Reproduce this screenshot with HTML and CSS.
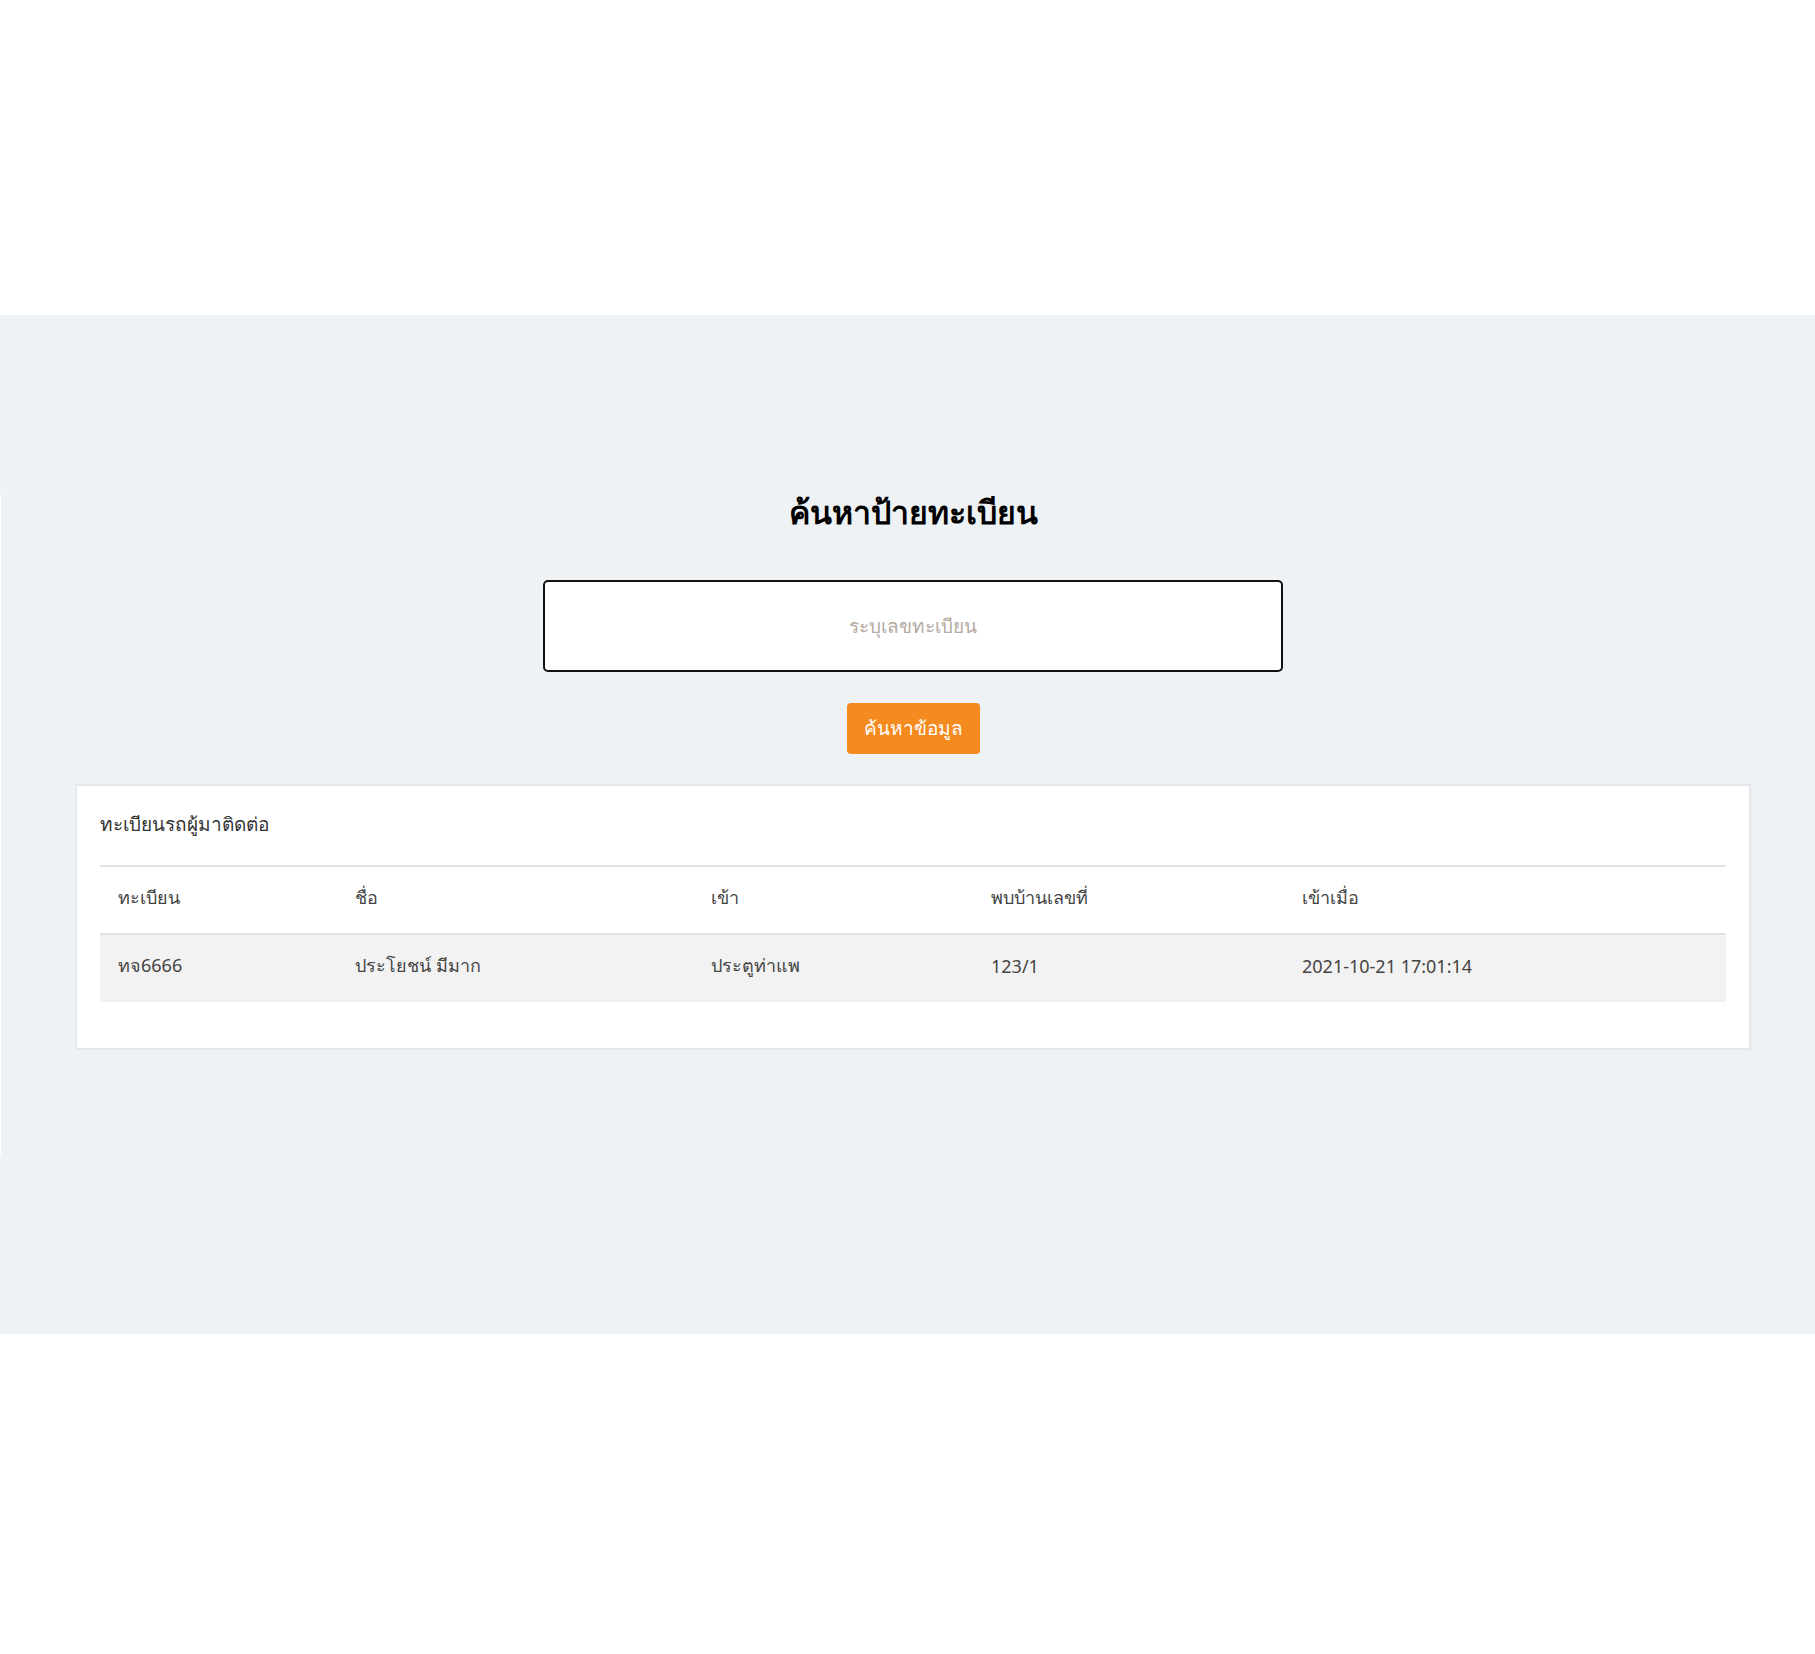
FILE: index.html
```html
<!DOCTYPE html>
<html lang="th">
<head>
  <meta charset="UTF-8" />
  <meta name="viewport" content="width=device-width, initial-scale=1" />
  <title>ค้นหาป้ายทะเบียน</title>
  <link rel="stylesheet" href="styles.css">
</head>
<body>
  <div class="top"></div>
  <div class="band">
    <div class="page">
      <h2 class="title">ค้นหาป้ายทะเบียน</h2>
      <input class="plate" placeholder="ระบุเลขทะเบียน" />
      <button class="search">ค้นหาข้อมูล</button>

      <div class="card">
        <div class="card-title">ทะเบียนรถผู้มาติดต่อ</div>
        <table class="list">
          <thead>
            <tr>
              <th class="c1">ทะเบียน</th>
              <th class="c2">ชื่อ</th>
              <th class="c3">เข้า</th>
              <th class="c4">พบบ้านเลขที่</th>
              <th>เข้าเมื่อ</th>
            </tr>
          </thead>
          <tbody>
            <tr>
              <td>ทจ6666</td>
              <td>ประโยชน์ มีมาก</td>
              <td>ประตูท่าแพ</td>
              <td>123/1</td>
              <td>2021-10-21 17:01:14</td>
            </tr>
          </tbody>
        </table>
      </div>
    </div>
  </div>
</body>
</html>
```

FILE: styles.css
```css
body { margin: 0; font-family: "Noto Sans", "Liberation Sans", sans-serif; background: #fff; color: #444; }
.top { height: 315px; }
.band { background: #eef2f5; padding: 179px 0; }
.page { border-left: 1px solid #fff; padding: 2px 64px 105px 74px; display: flex; flex-direction: column; align-items: center; }
.title { margin: -4px 0 0; font-size: 32px; line-height: 40px; font-weight: 700; color: #000; }
.plate { box-sizing: border-box; margin-top: 48px; width: 740px; height: 92px; border: 2px solid #111; border-radius: 5px; background: #fff; text-align: center; font-family: inherit; font-size: 19px; color: #333; outline: none; padding-bottom: 2px; }
.plate::placeholder { color: #b3aaa2; }
.search { margin-top: 31px; width: 133px; height: 51px; background: #f58a1f; color: #fff; border: none; border-radius: 4px; font-family: inherit; font-size: 19px; padding-bottom: 3px; cursor: pointer; }
.card { box-sizing: border-box; align-self: stretch; margin-top: 30px; background: #fff; border: 2px solid #e4e8ec; padding: 23px 23px 46px; }
.card-title { font-size: 19px; line-height: 30px; color: #333; padding-bottom: 26px; border-bottom: 2px solid #dfe3e7; }
.list { width: 100%; border-collapse: collapse; font-size: 18px; }
.list th, .list td { text-align: left; font-weight: 400; padding: 0 18px 6px; color: #444; }
.list th { height: 60px; border-bottom: 2px solid #dfe3e7; }
.list td { height: 61px; background: #f3f2f3; }
.c1 { width: 201px; }
.c2 { width: 320px; }
.c3 { width: 244px; }
.c4 { width: 275px; }
```
